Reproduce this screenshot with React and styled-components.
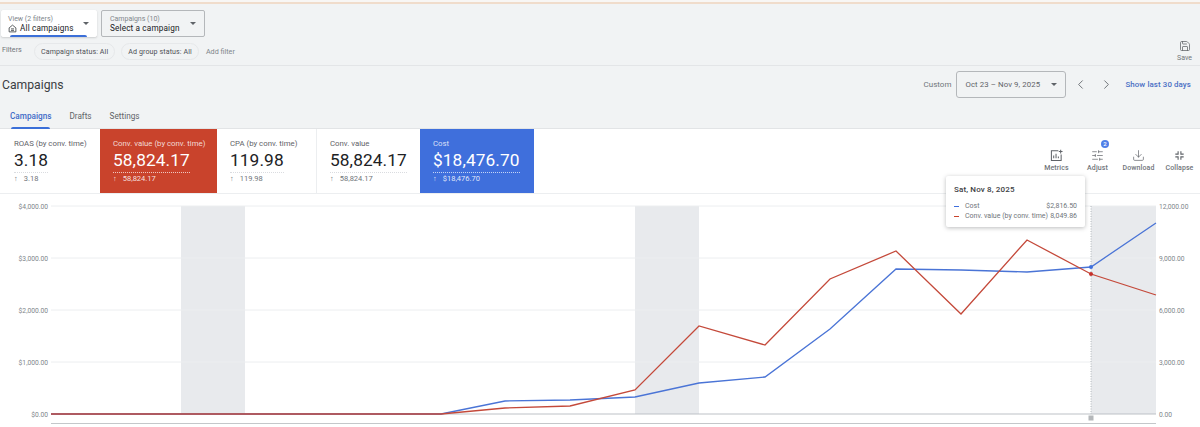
import React from "react";
import styled, { createGlobalStyle } from "styled-components";
import { ChevronLeft, ChevronRight, Download, Save, SlidersHorizontal } from "lucide-react";

const Global = createGlobalStyle`
  html, body { margin: 0; padding: 0; background: #fff; }
  body { font-family: Roboto, "Liberation Sans", sans-serif; color: #3c4043; }
  * { box-sizing: border-box; }
`;
const Page = styled.div`width: 1200px; height: 427px; overflow: hidden; position: relative; background: #fff;`;
const Strip = styled.div`height: 4px; background: #f0dccb; border-top: 2px solid #f8f6f4;`;
const Header = styled.header`height: 125px; background: #f1f3f4; border-bottom: 1px solid #e2e4e6; display: flex; flex-direction: column;`;
const TopArea = styled.div`height: 62px; border-bottom: 1px solid #e3e5e7; display: flex; justify-content: space-between; padding: 6px 8px 0 1px;`;
const TopLeft = styled.div`display: flex; flex-direction: column; gap: 6px;`;
const Selectors = styled.div`display: flex; gap: 4px;`;
const Selector = styled.div`
  position: relative; height: 27px; width: ${p => p.$w}px; border-radius: 2px;
  background: ${p => p.$active ? "#fff" : "#f1f3f4"};
  border: 1px solid ${p => p.$active ? "#fff" : "#b4b7ba"};
  box-shadow: ${p => p.$active ? "0 1px 2px rgba(60,64,67,.2)" : "none"};
  padding: 3px 0 0 ${p => p.$pad}px; display: flex; flex-direction: column;
`;
const SelLabel = styled.span`font-size: 7px; line-height: 10px; color: #80868b;`;
const SelValue = styled.span`font-size: 8.2px; line-height: 9px; font-weight: 400; letter-spacing: .15px; color: #202124; display: flex; align-items: center; gap: 3px;`;
const Caret = styled.i`
  position: absolute; right: ${p => p.$r ?? 7}px; top: ${p => p.$t ?? 11}px; width: 0; height: 0;
  border-left: 3px solid transparent; border-right: 3px solid transparent; border-top: 3px solid #5f6368;
`;
const ActiveBar = styled.i`position: absolute; left: 8px; right: 9px; bottom: -1px; height: 2px; background: #3b6fd8; border-radius: 2px 2px 0 0;`;
const FilterRow = styled.div`display: flex; align-items: center; height: 17px; font-size: 7.2px; color: #5f6368;`;
const FilterLabel = styled.span`width: 33px; padding-left: 1px; margin-top: -4px; color: #70757a;`;
const Chip = styled.span`
  height: 17px; border: 1px solid #e6e8ea; border-radius: 9px; padding: 0 6px; display: inline-flex; align-items: center;
  margin-right: 6px; font-weight: 400; letter-spacing: .1px; font-size: 7.1px; color: #4d5156;
`;
const AddFilter = styled.span`margin-left: 1px; color: #80868b;`;
const SaveBtn = styled.div`display: flex; flex-direction: column; align-items: center; gap: 2px; font-size: 7px; padding-top: 30px; color: #70757a;`;
const TitleRow = styled.div`height: 37px; display: flex; align-items: center; justify-content: space-between; padding: 0 9px 0 2px;`;
const Title = styled.h1`margin: 0; font-size: 12.2px; font-weight: 400; color: #3c4043;`;
const DateGroup = styled.div`display: flex; align-items: center;`;
const CustomLabel = styled.span`font-size: 8px; color: #70757a; margin-right: 5px;`;
const DateBox = styled.div`
  position: relative; width: 110px; height: 27px; border: 1px solid #b4b7ba; border-radius: 3px; display: flex; align-items: center;
  padding-left: 8px; font-size: 7.8px; color: #5f6368; letter-spacing: .1px; margin-right: 1px;
`;
const Nav = styled.span`display: flex; width: 26px; justify-content: center; color: #5f6368; margin-right: ${p => p.$m || 0}px;`;
const LastLink = styled.span`font-size: 7.9px; color: #4a6fc4; font-weight: 500; letter-spacing: .1px;`;
const Tabs = styled.nav`flex: 1; display: flex; align-items: stretch; padding-left: 10px; gap: 18px; font-size: 8.2px;`;
const Tab = styled.span`
  display: flex; align-items: center; position: relative; color: ${p => p.$on ? "#3f6bc8" : "#5f6368"};
  font-weight: ${p => p.$on ? 500 : 400};
  &::after { content: ${p => p.$on ? '""' : "none"}; position: absolute; left: 1px; right: 1px; bottom: -1px; height: 2px; background: #3b6fd8; border-radius: 2px 2px 0 0; }
`;
const ScoreRow = styled.section`height: 65px; display: flex; background: #fff; border-bottom: 1px solid #eceef0; position: relative;`;
const Card = styled.div`
  width: ${p => p.$w}px; padding: 9px 0 0 ${p => p.$pad ?? 14}px; background: ${p => p.$bg || "#fff"};
  color: ${p => p.$bg ? "#fff" : "#202124"};
  border-right: ${p => p.$div ? "1px solid #eceef0" : "0"};
`;
const CardLabel = styled.div`font-size: 7.8px; line-height: 11px; color: ${p => p.$soft ? "rgba(255,255,255,.8)" : "#5f6368"};`;
const CardValue = styled.div`
  display: inline-block; font-size: 17.3px; line-height: 22px; padding-bottom: 1px; font-weight: 400; letter-spacing: .1px;
  border-bottom: 1px dotted ${p => p.$soft ? "rgba(255,255,255,.7)" : "#dadce0"}; min-width: 34px;
`;
const CardDelta = styled.div`font-size: 7.5px; line-height: 10px; margin-top: 1px; color: ${p => p.$soft ? "rgba(255,255,255,.85)" : "#70757a"}; span { margin-right: 6px; }`;
const Tools = styled.div`margin-left: auto; display: flex; align-items: flex-start; padding: 20px 0 0 0;`;
const Tool = styled.div`
  position: relative; width: 41px; display: flex; flex-direction: column; align-items: center; gap: 2px;
  font-size: 7px; font-weight: 500; color: #70757a; letter-spacing: .1px;
`;
const Badge = styled.b`
  position: absolute; top: -9px; left: 24px; width: 8px; height: 8px; border-radius: 50%; background: #4f7fe8; color: #fff;
  font-size: 6px; line-height: 8px; text-align: center; font-weight: 500;
`;
const ChartArea = styled.section`position: relative; height: 233px; background: #fff;`;
const ChartSvg = styled.svg`display: block; width: 1200px; height: 233px;`;
const Tooltip = styled.aside`
  position: absolute; left: 946px; top: -18px; width: 139px; height: 51px; background: #fff; border-radius: 2px;
  box-shadow: 0 1px 4px rgba(60,64,67,.35); padding: 8px 8px 0 8px;
`;
const TipDate = styled.div`font-size: 8px; font-weight: 500; letter-spacing: .15px; color: #3c4043; margin-bottom: 6px; line-height: 11px;`;
const TipRow = styled.div`display: flex; align-items: center; font-size: 7px; line-height: 10px; color: #70757a;`;
const TipKey = styled.i`width: 5px; height: 1px; background: ${p => p.$c}; margin-right: 6px;`;
const TipVal = styled.span`margin-left: auto;`;

const W = 1200;
const top = 12;
const blue = [[51,220],[441,220],[505,207],[570,206],[635,203],[699,189],[765,183],[830,135],[896,75],[961,76],[1027,78],[1091,73],[1156,29]];
const red = [[51,220],[441,220],[505,214],[570,212],[635,196],[699,132],[765,151],[830,85],[896,57],[961,120],[1027,46],[1091,80],[1156,101]];
const pts = a => a.map(p => p.join(",")).join(" ");
const grid = [[12,"$4,000.00","12,000.00"],[64,"$3,000.00","9,000.00"],[116,"$2,000.00","6,000.00"],[168,"$1,000.00","3,000.00"],[220,"$0.00","0.00"]];
const labelStyle = { fontSize: 6.7, fill: "#80868b", fontFamily: "Roboto, sans-serif" };

const HomeIcon = () => (
  <svg width="9" height="9" viewBox="0 0 12 12" fill="none" stroke="#3c4043" strokeWidth="1.1">
    <path d="M1.5 5.2 6 1.5l4.5 3.7v5.3h-9z" /><path d="M4 8.5h4M4 6.5h4" />
  </svg>
);
const MetricsIcon = () => (
  <svg width="13" height="13" viewBox="0 0 14 14" fill="none" stroke="#5f6368" strokeWidth="1.1">
    <path d="M9 2H1.5v10.5H12V6" /><path d="M4 10V7M6.5 10V5M9 10V8" /><path d="M11.5 .8v4M9.5 2.8h4" />
  </svg>
);
const CollapseIcon = () => (
  <svg width="13" height="13" viewBox="0 0 14 14" fill="none" stroke="#5f6368" strokeWidth="1.2">
    <path d="M5.5 2.5v3h-3M8.5 2.5v3h3M5.5 11.5v-3h-3M8.5 11.5v-3h3" />
  </svg>
);

const Score = ({ w, pad, bg, div, label, value, delta }) => (
  <Card $w={w} $pad={pad} $bg={bg} $div={div}>
    <CardLabel $soft={!!bg}>{label}</CardLabel>
    <CardValue $soft={!!bg}>{value}</CardValue>
    <CardDelta $soft={!!bg}><span>↑</span>{delta}</CardDelta>
  </Card>
);

export default function App() {
  return (
    <Page>
      <Global />
      <Strip />
      <Header>
        <TopArea>
          <TopLeft>
            <Selectors>
              <Selector $active $w={96} $pad={6}>
                <SelLabel>View (2 filters)</SelLabel>
                <SelValue><HomeIcon />All campaigns</SelValue>
                <Caret />
                <ActiveBar />
              </Selector>
              <Selector $w={104} $pad={8}>
                <SelLabel>Campaigns (10)</SelLabel>
                <SelValue>Select a campaign</SelValue>
                <Caret $r={8} />
              </Selector>
            </Selectors>
            <FilterRow>
              <FilterLabel>Filters</FilterLabel>
              <Chip>Campaign status: All</Chip>
              <Chip>Ad group status: All</Chip>
              <AddFilter>Add filter</AddFilter>
            </FilterRow>
          </TopLeft>
          <SaveBtn><Save size={12} strokeWidth={1.5} color="#5f6368" />Save</SaveBtn>
        </TopArea>
        <TitleRow>
          <Title>Campaigns</Title>
          <DateGroup>
            <CustomLabel>Custom</CustomLabel>
            <DateBox>Oct 23 – Nov 9, 2025<Caret $r={8} $t={11} /></DateBox>
            <Nav><ChevronLeft size={15} strokeWidth={1.4} /></Nav>
            <Nav $m={6}><ChevronRight size={15} strokeWidth={1.4} /></Nav>
            <LastLink>Show last 30 days</LastLink>
          </DateGroup>
        </TitleRow>
        <Tabs>
          <Tab $on>Campaigns</Tab>
          <Tab>Drafts</Tab>
          <Tab>Settings</Tab>
        </Tabs>
      </Header>
      <ScoreRow>
        <Score w={100} label="ROAS (by conv. time)" value="3.18" delta="3.18" />
        <Score w={117} pad={13} bg="#c9432c" label="Conv. value (by conv. time)" value="58,824.17" delta="58,824.17" />
        <Score w={100} pad={13} div label="CPA (by conv. time)" value="119.98" delta="119.98" />
        <Score w={103} pad={13} label="Conv. value" value="58,824.17" delta="58,824.17" />
        <Score w={114} pad={13} bg="#3f6fdc" label="Cost" value="$18,476.70" delta="$18,476.70" />
        <Tools>
          <Tool><MetricsIcon />Metrics</Tool>
          <Tool><Badge>2</Badge><SlidersHorizontal size={13} strokeWidth={1.3} color="#5f6368" />Adjust</Tool>
          <Tool><Download size={13} strokeWidth={1.3} color="#5f6368" />Download</Tool>
          <Tool><CollapseIcon />Collapse</Tool>
        </Tools>
      </ScoreRow>
      <ChartArea>
        <ChartSvg viewBox={`0 0 ${W} 233`}>
          <rect x="181" y={top} width="64" height="208" fill="#e8eaed" />
          <rect x="635" y={top} width="64" height="208" fill="#e8eaed" />
          <rect x="1091" y={top} width="65" height="208" fill="#e8eaed" />
          {grid.map(([y, l, r]) => (
            <g key={y}>
              <line x1="51" x2="1156" y1={y} y2={y} stroke={y === 220 ? "#bdc1c6" : "#eceef0"} strokeWidth="1" />
              <text x="48" y={y + 2.8} textAnchor="end" style={labelStyle}>{l}</text>
              <text x="1159" y={y + 2.8} style={labelStyle}>{r}</text>
            </g>
          ))}
          <line x1="1091" x2="1091" y1={top} y2="220" stroke="#9aa0a6" strokeWidth=".7" strokeDasharray="1 1.5" />
          <polyline points={pts(blue)} fill="none" stroke="#4a74d6" strokeWidth="1.3" />
          <polyline points={pts(red)} fill="none" stroke="#c4493a" strokeWidth="1.3" />
          <circle cx="1091" cy="73" r="2" fill="#3f6fdc" />
          <circle cx="1091" cy="80" r="2" fill="#c5302a" />
          <rect x="1088.5" y="221.5" width="5" height="5" fill="#b4b7ba" />
          <line x1="51" x2="1156" y1="229.5" y2="229.5" stroke="#c4c7ca" strokeWidth="1" />
        </ChartSvg>
        <Tooltip>
          <TipDate>Sat, Nov 8, 2025</TipDate>
          <TipRow><TipKey $c="#3f6fdc" />Cost<TipVal>$2,816.50</TipVal></TipRow>
          <TipRow><TipKey $c="#c9432c" />Conv. value (by conv. time)<TipVal>8,049.86</TipVal></TipRow>
        </Tooltip>
      </ChartArea>
    </Page>
  );
}
